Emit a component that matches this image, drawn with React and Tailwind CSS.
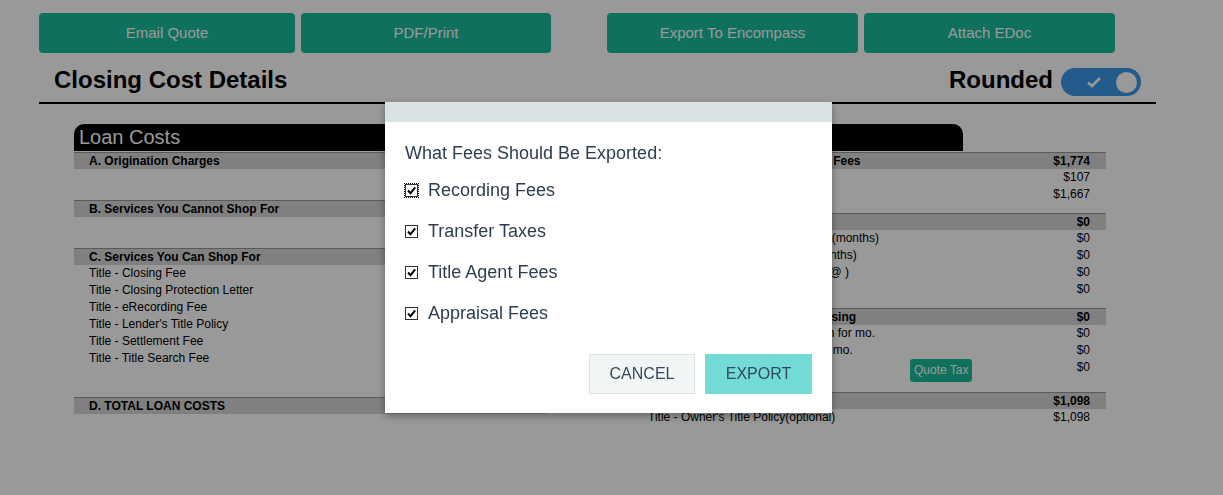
import React, { useState } from 'react';

const loanCosts = [
    { title: 'A. Origination Charges', rows: [], gap: 'mb-[31px]' },
    { title: 'B. Services You Cannot Shop For', rows: [], gap: 'mb-[31px]' },
    {
        title: 'C. Services You Can Shop For',
        gap: 'mb-[30px]',
        rows: [
            ['Title - Closing Fee'],
            ['Title - Closing Protection Letter'],
            ['Title - eRecording Fee'],
            ["Title - Lender's Title Policy"],
            ['Title - Settlement Fee'],
            ['Title - Title Search Fee'],
        ],
    },
    { title: 'D. TOTAL LOAN COSTS', rows: [], gap: '' },
];

const otherCosts = [
    {
        title: 'E. Taxes and Other Government Fees',
        total: '$1,774',
        rows: [
            ['Recording Fees and Other Taxes', '$107'],
            ['Transfer Taxes', '$1,667'],
        ],
    },
    {
        title: 'F. Prepaids',
        total: '$0',
        rows: [
            ["Homeowner's Insurance Premium (months)", '$0'],
            ['Mortgage Insurance Premium (months)', '$0'],
            ['Prepaid Interest (per day for days @ )', '$0'],
            ['Property Taxes (months)', '$0'],
        ],
    },
    {
        title: 'G. Initial Escrow Payment at Closing',
        total: '$0',
        rows: [
            ["Homeowner's Insurance per month for mo.", '$0'],
            ['Mortgage Insurance per month for mo.', '$0'],
            ['Property Taxes per month for mo.', '$0', 'quote'],
        ],
    },
    {
        title: 'H. Other',
        total: '$1,098',
        rows: [["Title - Owner's Title Policy(optional)", '$1,098']],
    },
];

const fees = ['Recording Fees', 'Transfer Taxes', 'Title Agent Fees', 'Appraisal Fees'];

const SectionBar = ({ title, total }) => (
    <div className="flex h-[17px] items-center justify-between border-t border-[#969696] bg-[#d5d5d5] pl-[15px] pr-[16px] text-[12px] font-bold text-black">
        <span>{title}</span>
        {total && <span>{total}</span>}
    </div>
);

const CostRow = ({ label, amount, quote }) => (
    <div className="flex items-start pl-[15px] pr-[16px] text-[12px] leading-[17px] text-black">
        <span className={quote ? 'w-[262px] shrink-0' : ''}>{label}</span>
        {quote && (
            <button className="h-[23px] rounded-[3px] bg-[#1abc9c] px-[4px] text-[12px] text-white">Quote Tax</button>
        )}
        {amount && <span className="ml-auto">{amount}</span>}
    </div>
);

const Tab = ({ children }) => (
    <div className="mb-px h-[27px] w-[330px] rounded-t-[10px] bg-black pl-[5px] text-[20px] leading-[27px] text-white">
        {children}
    </div>
);

const CheckBox = ({ checked, focused }) => (
    <span
        className={`flex h-[13px] w-[13px] shrink-0 items-center justify-center border border-[#333] bg-white ${
            focused ? 'outline outline-1 outline-dotted outline-black' : ''
        }`}
    >
        {checked && (
            <svg viewBox="0 0 11 11" className="h-[11px] w-[11px]">
                <path d="M2 5.5 L4.5 8.2 L9.2 2.4" fill="none" stroke="#000" strokeWidth="2" />
            </svg>
        )}
    </span>
);

export default function App() {
    const [rounded, setRounded] = useState(true);
    const [selected, setSelected] = useState(fees.map(() => true));

    const toggleFee = (i) => setSelected((prev) => prev.map((v, j) => (j === i ? !v : v)));

    return (
        <div className="relative min-h-screen bg-white font-['Liberation_Sans',Arial,sans-serif]">
            <div className="box-content w-[1117px] pl-[39px] pt-[13px]">
                {/* action buttons */}
                <div className="flex text-[15px] text-white">
                    <button className="h-[40px] w-[256px] rounded-[4px] bg-[#1abc9c]">Email Quote</button>
                    <button className="ml-[6px] h-[40px] w-[250px] rounded-[4px] bg-[#1abc9c]">PDF/Print</button>
                    <button className="ml-[56px] h-[40px] w-[251px] rounded-[4px] bg-[#1abc9c]">Export To Encompass</button>
                    <button className="ml-[6px] h-[40px] w-[251px] rounded-[4px] bg-[#1abc9c]">Attach EDoc</button>
                </div>

                <div className="mt-[9px] flex h-[42px] items-center justify-between border-b-2 border-black pl-[15px] pr-[15px]">
                    <h1 className="mb-[4px] text-[24px] font-bold text-black">Closing Cost Details</h1>
                    <div className="flex items-center gap-[8px]">
                        <span className="mb-[4px] text-[24px] font-bold text-black">Rounded</span>
                        <button
                            onClick={() => setRounded(!rounded)}
                            className="flex h-[28px] w-[80px] items-center rounded-full bg-[#3b99e6] pl-[25px] pr-[4px]"
                        >
                            {rounded && (
                                <svg viewBox="0 0 16 12" className="h-[12px] w-[16px]">
                                    <path d="M2 6.5 L6 10 L14 2" fill="none" stroke="#fff" strokeWidth="2.6" />
                                </svg>
                            )}
                            <span className="ml-auto h-[21px] w-[21px] rounded-full bg-white" />
                        </button>
                    </div>
                </div>

                {/* cost tables */}
                <div className="ml-[35px] mt-[20px] flex gap-[86px]">
                    <div className="w-[473px]">
                        <Tab>Loan Costs</Tab>
                        {loanCosts.map((s) => (
                            <div key={s.title} className={s.gap}>
                                <SectionBar title={s.title} />
                                {s.rows.map(([label]) => (
                                    <CostRow key={label} label={label} />
                                ))}
                            </div>
                        ))}
                    </div>
                    <div className="w-[473px]">
                        <Tab>Other Costs</Tab>
                        {otherCosts.map((s) => (
                            <div key={s.title} className="mb-[10px]">
                                <SectionBar title={s.title} total={s.total} />
                                {s.rows.map(([label, amount, quote]) => (
                                    <CostRow key={label} label={label} amount={amount} quote={quote} />
                                ))}
                            </div>
                        ))}
                    </div>
                </div>
            </div>

            {/* export dialog */}
            <div className="fixed inset-0 bg-black/40" />
            <div className="fixed left-[385px] top-[102px] w-[447px] bg-white shadow-[0_3px_8px_rgba(0,0,0,0.35)]">
                <div className="h-[20px] bg-[#dae1e3]" />
                <div className="px-[20px] pb-[19px] pt-[20px] text-[#2c3e50]">
                    <p className="text-[18px] leading-[22px]">What Fees Should Be Exported:</p>
                    <div className="mt-[6px]">
                        {fees.map((fee, i) => (
                            <label
                                key={fee}
                                onClick={() => toggleFee(i)}
                                className="flex h-[41px] cursor-pointer items-center gap-[10px] text-[18px]"
                            >
                                <CheckBox checked={selected[i]} focused={i === 0} />
                                {fee}
                            </label>
                        ))}
                    </div>
                    <div className="mt-[20px] flex justify-end gap-[10px]">
                        <button className="h-[40px] w-[106px] border border-[#dce2e5] bg-[#f2f5f6] text-[16px] text-[#34495e]">
                            CANCEL
                        </button>
                        <button className="h-[40px] w-[107px] bg-[#72dbd4] text-[16px] text-[#34495e]">EXPORT</button>
                    </div>
                </div>
            </div>
        </div>
    );
}
